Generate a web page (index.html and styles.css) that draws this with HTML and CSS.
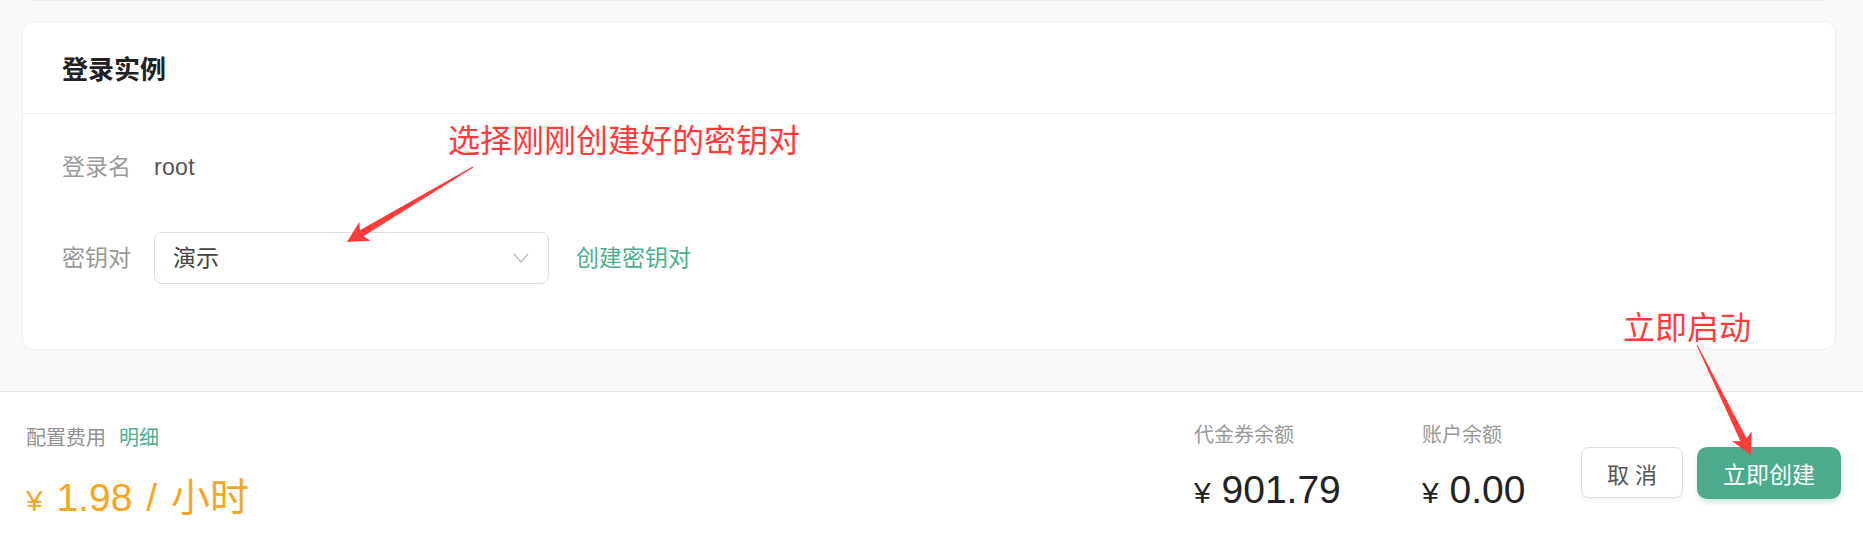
FILE: index.html
```html
<!DOCTYPE html>
<html lang="zh-CN">
<head>
<meta charset="utf-8">
<title>登录实例</title>
<link rel="stylesheet" href="styles.css">
</head>
<body>
<div class="page">
  <main class="content">
    <div class="prev-card"></div>
    <section class="card">
      <header class="card-head"><h2 class="card-title">登录实例</h2></header>
      <div class="card-body">
        <div class="row">
          <span class="label">登录名</span>
          <span class="value">root</span>
        </div>
        <div class="row">
          <span class="label">密钥对</span>
          <div class="select">
            <span class="select-text">演示</span>
            <svg class="chevron" width="16" height="10" viewBox="0 0 16 10"><polyline points="0.8,0.8 8,9 15.2,0.8" fill="none" stroke="#bdbdbd" stroke-width="1.3"/></svg>
          </div>
          <a class="link">创建密钥对</a>
        </div>
      </div>
    </section>
  </main>
  <footer class="footer">
    <div class="cost">
      <div class="cost-label">配置费用<a class="detail">明细</a></div>
      <div class="price"><span class="yen">¥</span> 1.98 / 小时</div>
    </div>
    <div class="summary">
      <div class="balance balance-voucher">
        <div class="balance-label">代金券余额</div>
        <div class="balance-value"><span class="yen">¥</span> 901.79</div>
      </div>
      <div class="balance balance-account">
        <div class="balance-label">账户余额</div>
        <div class="balance-value"><span class="yen">¥</span> 0.00</div>
      </div>
      <div class="actions">
        <button class="btn btn-cancel">取 消</button>
        <button class="btn btn-primary">立即创建</button>
      </div>
    </div>
  </footer>
  <div class="annotations">
    <div class="note note-key">选择刚刚创建好的密钥对</div>
    <div class="note note-start">立即启动</div>
    <svg class="arrows" width="1863" height="541" viewBox="0 0 1863 541">
      <polygon fill="#ff3b3b" points="347,242 370.7,240.7 363.4,236.3 473.3,167.4 472.7,166.6 359.8,230.3 359.4,221.8"/>
      <polygon fill="#ff3b3b" points="1751,455 1751.6,431.3 1746.6,438.2 1697.4,344.8 1696.6,345.2 1740.4,441.3 1731.9,441"/>
    </svg>
  </div>
</div>
</body>
</html>
```
FILE: styles.css
```css
* { box-sizing: border-box; }
html, body { margin: 0; padding: 0; }
body {
  width: 1863px;
  height: 541px;
  overflow: hidden;
  background: #f9f9f9;
  font-family: "Liberation Sans", "Noto Sans CJK SC", sans-serif;
  color: #333;
}
.page {
  position: relative;
  width: 1863px;
  height: 541px;
}
.content {
  height: 391px;
  padding: 0 27px 0 22px;
}
.prev-card {
  height: 1px;
  margin: 0 10px;
  background: #ececec;
}
.card {
  margin-top: 20px;
  background: #fff;
  border: 1px solid #eeeeee;
  border-radius: 12px;
}
.card-head {
  height: 92px;
  padding: 5px 39px 0;
  display: flex;
  align-items: center;
  border-bottom: 1px solid #eeeeee;
}
.card-title {
  margin: 0;
  font-size: 26px;
  line-height: 36px;
  font-weight: 700;
  color: #222;
}
.card-body {
  padding: 27px 39px 65px;
  display: flex;
  flex-direction: column;
  gap: 39px;
}
.row {
  height: 52px;
  display: flex;
  align-items: center;
}
.label {
  width: 92px;
  flex: none;
  font-size: 23px;
  line-height: 30px;
  color: #999;
}
.value {
  font-size: 23px;
  line-height: 30px;
  color: #555;
  letter-spacing: 0.3px;
}
.select {
  width: 395px;
  height: 52px;
  border: 1px solid #dcdcdc;
  border-radius: 8px;
  display: flex;
  align-items: center;
  justify-content: space-between;
  padding: 0 19px 0 18px;
}
.select-text {
  font-size: 23px;
  line-height: 30px;
  color: #444;
}
.chevron { display: block; }
.link {
  margin-left: 27px;
  font-size: 23px;
  line-height: 30px;
  color: #4caf8e;
}
.footer {
  height: 150px;
  background: #fff;
  border-top: 1px solid #e6e6e6;
  padding: 0 22px 0 26px;
  display: flex;
  justify-content: space-between;
  align-items: flex-start;
}
.cost { padding-top: 32px; }
.cost-label {
  font-size: 20px;
  line-height: 28px;
  color: #919191;
}
.detail {
  margin-left: 13px;
  color: #4caf8e;
}
.price {
  margin-top: 27px;
  font-size: 39px;
  line-height: 38px;
  word-spacing: 3px;
  color: #f6a623;
}
.yen { font-size: 30px; }
.summary {
  display: flex;
  align-items: flex-start;
}
.balance { padding-top: 29px; }
.balance-voucher { width: 228px; }
.balance-account { width: 159px; }
.balance-label {
  font-size: 20px;
  line-height: 28px;
  color: #999;
}
.balance-value {
  margin-top: 22px;
  font-size: 39px;
  line-height: 38px;
  color: #222;
}
.actions {
  margin-top: 55px;
  display: flex;
  gap: 14px;
}
.btn {
  font-family: "Liberation Sans", "Noto Sans CJK SC", sans-serif;
  cursor: pointer;
  padding: 0;
}
.btn-cancel {
  width: 102px;
  height: 51px;
  border: 1px solid #dcdcdc;
  border-radius: 8px;
  background: #fff;
  color: #555;
  font-size: 22px;
  box-shadow: 0 3px 4px rgba(0, 0, 0, 0.05);
}
.btn-primary {
  width: 144px;
  height: 52px;
  border: none;
  border-radius: 10px;
  background: #4bab8c;
  color: #fff;
  font-size: 23px;
  box-shadow: 0 4px 4px rgba(75, 171, 140, 0.22);
}
.annotations {
  position: absolute;
  top: 0;
  left: 0;
  width: 1863px;
  height: 541px;
  pointer-events: none;
}
.arrows {
  position: absolute;
  top: 0;
  left: 0;
}
.note {
  position: absolute;
  font-family: "Noto Sans CJK SC", sans-serif;
  font-size: 32px;
  line-height: 40px;
  color: #ff3b3b;
  white-space: nowrap;
}
.note-key { left: 448px; top: 118px; }
.note-start { left: 1623px; top: 305px; }
```
